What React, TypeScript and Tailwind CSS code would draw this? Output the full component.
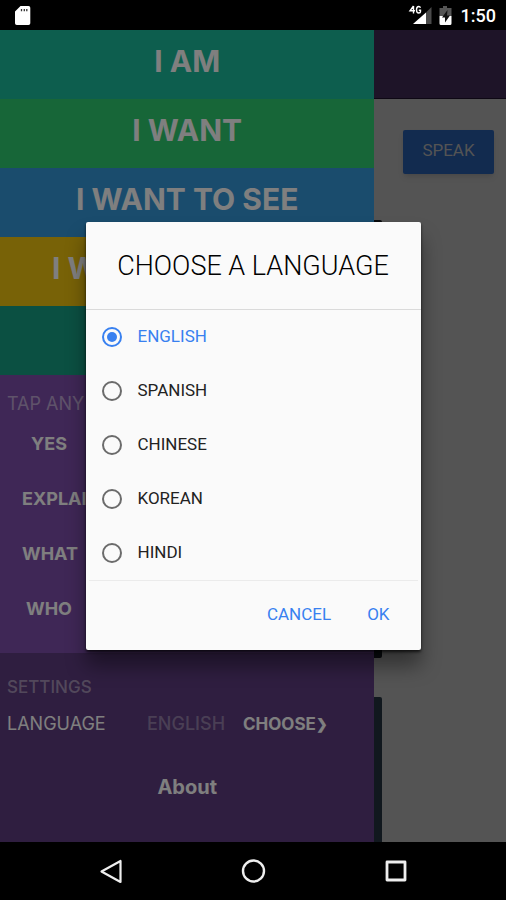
import { useState } from "react";

const PHRASES = [
  { label: "I AM", color: "bg-[#1abc9c] text-center" },
  { label: "I WANT", color: "bg-[#2ecc71] text-center" },
  { label: "I WANT TO SEE", color: "bg-[#3498db] text-center" },
  { label: "I W", color: "bg-[#f1c40f] text-left pl-13" },
  { label: "", color: "bg-[#16a085] text-center" },
];

const WORDS = ["YES", "EXPLAIN", "WHAT", "WHO"];

const LANGUAGES = ["ENGLISH", "SPANISH", "CHINESE", "KOREAN", "HINDI"];

function StatusBar() {
  return (
    <div className="h-[30px] shrink-0 bg-black flex items-center px-[10px] text-white">
      <svg width="26" height="30" viewBox="0 0 26 30" aria-hidden="true">
        <path d="M10.5 6H18.500a1.800 1.800 0 0 1 1.800 1.800v15.400A1.800 1.800 0 0 1 18.500 25H6.800a1.800 1.800 0 0 1-1.800-1.800V11.500z" fill="#fff" />
        <path d="M11.500 9v2.300M14.300 9v2.300M16.800 9v2.300" stroke="#333" strokeWidth="1.300" />
      </svg>
      <svg className="ml-auto" width="53" height="30" viewBox="0 0 53 30" aria-hidden="true">
        <path d="M18 12.500 23.500 7V24H18z" fill="#4a4a4a" />
        <path d="M5 24 18 12.500V24z" fill="#fff" />
        <path d="M5.500 6 2 10.800H7M5.500 6V13.500M12.500 7.800Q12 6.500 10.800 6.500 8.500 6.500 8.500 9.800 8.500 13 10.800 13 12.500 13 12.500 11.500V10.300H10.800" fill="none" stroke="#fff" strokeWidth="1.400" />
        <path d="M35 6h4v2h4.500v8h-12V8H35z" fill="#555" />
        <path d="M31.500 16h12v7.500a1.500 1.500 0 0 1-1.500 1.500h-9a1.500 1.500 0 0 1-1.500-1.500z" fill="#fff" />
        <path d="M39.500 10 34 17.500h3V22.500l5-7h-3z" fill="#111" />
      </svg>
      <span className="font-['Roboto',sans-serif] text-[18px] leading-[30px] pt-px font-medium">1:50</span>
    </div>
  );
}

function Drawer({ language }: { language: string }) {
  return (
    <nav className="w-[74%] shrink-0 flex flex-col font-['Inter',sans-serif] text-white">
      {PHRASES.map((phrase, i) => (
        <button key={i} className={`h-[69px] shrink-0 pb-1.5 text-[30px] font-bold ${phrase.color}`}>
          {phrase.label}
        </button>
      ))}

      <section className="h-[278px] shrink-0 bg-[#7e4eac] pt-[17px]">
        <h2 className="pl-[7px] text-[18px] leading-6 text-white/50">TAP ANY</h2>
        <div className="flex flex-col pl-[22px]">
          {WORDS.map((word) => (
            <button key={word} className="w-[54px] h-[55px] text-[18px] font-bold text-center">
              {word}
            </button>
          ))}
        </div>
      </section>

      <section className="flex-1 bg-[#5e3c80] pt-[22px]">
        <h2 className="pl-[7px] text-[17px] leading-6 font-medium text-white/45">SETTINGS</h2>
        <div className="mt-[13px] pl-[7px] flex items-center text-[18px] leading-6">
          <span className="w-[140px]">LANGUAGE</span>
          <span className="w-24 font-medium text-white/35">{language}</span>
          <button className="text-[17px] font-bold flex items-center">
            CHOOSE<span className="text-[14px]">❯</span>
          </button>
        </div>
        <a href="#about" className="mt-[37px] block text-center text-[20px] leading-7 font-bold">
          About
        </a>
      </section>
    </nav>
  );
}

function MainPanel() {
  return (
    <main className="flex-1 flex flex-col bg-[#a8a8a8]">
      <header className="h-[69px] bg-[#3c2850] border-b border-[#1c1028]" />
      <button className="mt-[31px] mr-3 self-end w-[91px] h-11 pb-0.5 rounded-xs bg-[#24569f] text-[#a8a8a8] font-['Roboto',sans-serif] text-[17px] shadow-md">
        SPEAK
      </button>
      <div className="mt-[46px] w-2 h-[438px] rounded-r-xs bg-[#12161c]" />
      <div className="mt-[39px] w-2 flex-1 rounded-tr-xs bg-[#22303c]" />
    </main>
  );
}

function NavBar() {
  return (
    <div className="h-[58px] shrink-0 bg-black flex items-center justify-center gap-[114px]">
      <button aria-label="Back">
        <svg width="28" height="28" viewBox="0 0 28 28" fill="none" stroke="#eee" strokeWidth="2.200" strokeLinejoin="round">
          <path d="M23.500 4v21L4.500 14.500z" />
        </svg>
      </button>
      <button aria-label="Home">
        <svg width="28" height="28" viewBox="0 0 28 28" fill="none" stroke="#eee" strokeWidth="2.400">
          <circle cx="14.500" cy="14" r="10.500" />
        </svg>
      </button>
      <button aria-label="Recent apps">
        <svg width="28" height="28" viewBox="0 0 28 28" fill="none" stroke="#eee" strokeWidth="2.800" strokeLinejoin="round">
          <path d="M6 5h18v18H6z" />
        </svg>
      </button>
    </div>
  );
}

export default function App() {
  const [selected, setSelected] = useState("ENGLISH");

  return (
    <div className="min-h-screen flex flex-col bg-black">
      <StatusBar />

      <div className="relative flex-1 flex">
        <Drawer language="ENGLISH" />
        <MainPanel />

        {/* Language dialog */}
        <div className="absolute inset-0 bg-black/50 flex items-center justify-center">
          <div
            role="dialog"
            aria-labelledby="dialog-title"
            className="w-[335px] rounded-xs bg-[#fafafa] font-['Roboto',sans-serif] shadow-[0_2px_3px_rgba(0,0,0,0.7),0_16px_20px_rgba(0,0,0,0.4)]"
          >
            <h1 id="dialog-title" className="h-[87px] text-center text-[27px] leading-[88px] font-light text-black">
              CHOOSE A LANGUAGE
            </h1>
            <div className="border-t border-[#dadada]">
              {LANGUAGES.map((lang) => (
                <label
                  key={lang}
                  className={`h-[54px] pl-4 flex items-center gap-4 text-[17px] ${
                    selected === lang ? "text-[#3880f0]" : "text-[#222]"
                  }`}
                >
                  <input
                    type="radio"
                    name="language"
                    checked={selected === lang}
                    onChange={() => setSelected(lang)}
                    className="appearance-none size-5 rounded-full border-2 border-[#6b6b6b] checked:border-[#3880f0] checked:bg-[#3880f0] checked:bg-clip-content checked:p-[3px]"
                  />
                  {lang}
                </label>
              ))}
            </div>
            <div className="mx-[3px] h-[70px] pb-0.5 border-t border-[#ebebeb] flex items-center justify-end gap-9 pr-7 text-[17px] text-[#3880f0]">
              <button>CANCEL</button>
              <button>OK</button>
            </div>
          </div>
        </div>
      </div>

      <NavBar />
    </div>
  );
}
